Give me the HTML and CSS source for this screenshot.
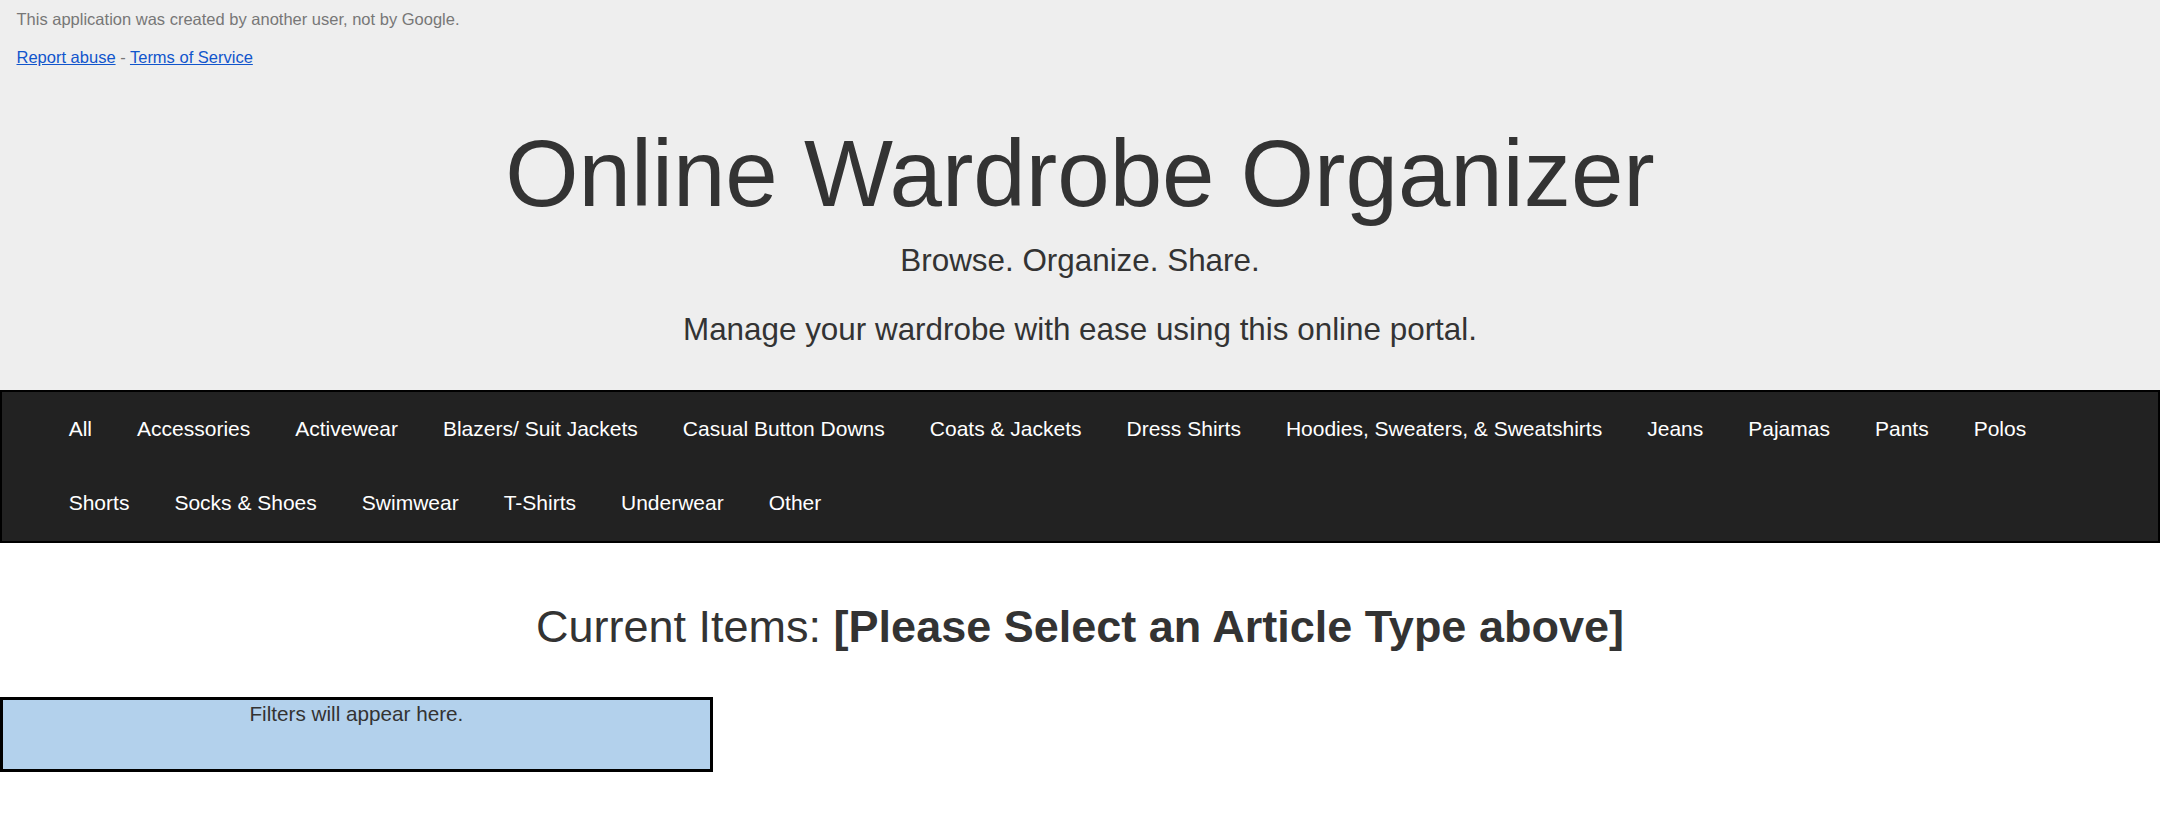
FILE: index.html
```html
<!DOCTYPE html>
<html>
<head>
<meta charset="utf-8">
<title>Online Wardrobe Organizer</title>
<link rel="stylesheet" href="styles.css">
</head>
<body>
<header class="masthead">
  <div class="notice">This application was created by another user, not by Google.</div>
  <div class="notice-links"><a href="#" class="glink">Report abuse</a> - <a href="#" class="glink">Terms of Service</a></div>
  <h1 class="title">Online Wardrobe Organizer</h1>
  <p class="tagline">Browse. Organize. Share.</p>
  <p class="tagline tagline-second">Manage your wardrobe with ease using this online portal.</p>
</header>
<nav class="catnav">
  <a class="catlink" href="#">All</a>
  <a class="catlink" href="#">Accessories</a>
  <a class="catlink" href="#">Activewear</a>
  <a class="catlink" href="#">Blazers/ Suit Jackets</a>
  <a class="catlink" href="#">Casual Button Downs</a>
  <a class="catlink" href="#">Coats &amp; Jackets</a>
  <a class="catlink" href="#">Dress Shirts</a>
  <a class="catlink" href="#">Hoodies, Sweaters, &amp; Sweatshirts</a>
  <a class="catlink" href="#">Jeans</a>
  <a class="catlink" href="#">Pajamas</a>
  <a class="catlink" href="#">Pants</a>
  <a class="catlink" href="#">Polos</a>
  <a class="catlink" href="#">Shorts</a>
  <a class="catlink" href="#">Socks &amp; Shoes</a>
  <a class="catlink" href="#">Swimwear</a>
  <a class="catlink" href="#">T-Shirts</a>
  <a class="catlink" href="#">Underwear</a>
  <a class="catlink" href="#">Other</a>
</nav>
<main class="content">
  <h2 class="current">Current Items: <strong>[Please Select an Article Type above]</strong></h2>
  <div class="filters">Filters will appear here.</div>
</main>
</body>
</html>
```

FILE: styles.css
```css
html, body {
  margin: 0;
  padding: 0;
  background: #ffffff;
  font-family: "Liberation Sans", Arial, sans-serif;
}

.masthead {
  background: #eeeeee;
  padding: 8.6px 0 40.2px 0;
  color: #333333;
}

.notice {
  font-size: 16.5px;
  line-height: 20px;
  color: #777777;
  padding-left: 16.5px;
}

.notice-links {
  font-size: 16.5px;
  line-height: 20px;
  color: #777777;
  padding-left: 16.5px;
  margin-top: 18.4px;
}

.glink {
  color: #1155cc;
  text-decoration: underline;
}

.title {
  margin: 51.8px 0 0 0;
  font-size: 94.3px;
  line-height: 110px;
  font-weight: normal;
  text-align: center;
  color: #333333;
}

.tagline {
  margin: 12.6px 0 0 0;
  font-size: 31.4px;
  line-height: 40px;
  text-align: center;
  color: #333333;
}

.tagline-second {
  margin-top: 28.4px;
}

.catnav {
  display: flex;
  flex-wrap: wrap;
  background: #222222;
  border: 2px solid #000000;
  padding: 0 44.2px;
}

.catlink {
  display: block;
  padding: 0 22.5px;
  font-size: 21px;
  line-height: 74.5px;
  color: #ffffff;
  text-decoration: none;
}

.content {
  padding-top: 58.4px;
}

.current {
  margin: 0;
  font-size: 45px;
  line-height: 52px;
  font-weight: normal;
  text-align: center;
  color: #333333;
}

.current strong {
  font-weight: bold;
}

.filters {
  margin-top: 43.6px;
  width: 33%;
  box-sizing: border-box;
  height: 75px;
  border: 3px solid #000000;
  background: #b3d1ec;
  padding-top: 2.5px;
  font-size: 20.7px;
  line-height: 24px;
  text-align: center;
  color: #333333;
}
```
